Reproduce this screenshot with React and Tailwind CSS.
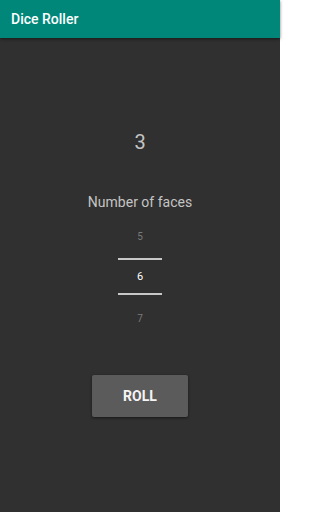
export default function App() {
  return (
    <div className="flex flex-col w-[280px] h-[512px] bg-[#303030] font-['Roboto',sans-serif]">
      <header className="h-[38px] shrink-0 flex items-center px-[11px] bg-[#00877a] shadow-[0_1px_3px_rgba(0,0,0,0.5)]">
        <h1 className="text-[14px] font-medium text-white leading-none">Dice Roller</h1>
      </header>

      <main className="flex flex-col items-center">
        <p className="mt-[90px] text-[20px] leading-[28px] text-[#c4c4c4]">3</p>

        <p className="mt-[36px] text-[14px] leading-[20px] text-[#c4c4c4]">Number of faces</p>

        <div className="mt-[15px] flex flex-col items-center w-[44px]">
          <span className="h-[20px] leading-[20px] text-[10px] text-[#7a7a7a]">5</span>
          <div className="mt-[11px] w-[44px] h-[2px] bg-[#c8c8c8]" />
          <span className="mt-[9px] h-[16px] leading-[16px] text-[11px] text-white">6</span>
          <div className="mt-[8px] w-[44px] h-[2px] bg-[#c8c8c8]" />
          <span className="mt-[14px] h-[20px] leading-[20px] text-[10px] text-[#7a7a7a]">7</span>
        </div>

        <button className="mt-[46px] w-[96px] h-[42px] rounded-[2px] bg-[#5b5b5b] text-[#f4f4f4] text-[14px] font-bold shadow-[0_1px_3px_rgba(0,0,0,0.5)]">
          ROLL
        </button>
      </main>
    </div>
  );
}
